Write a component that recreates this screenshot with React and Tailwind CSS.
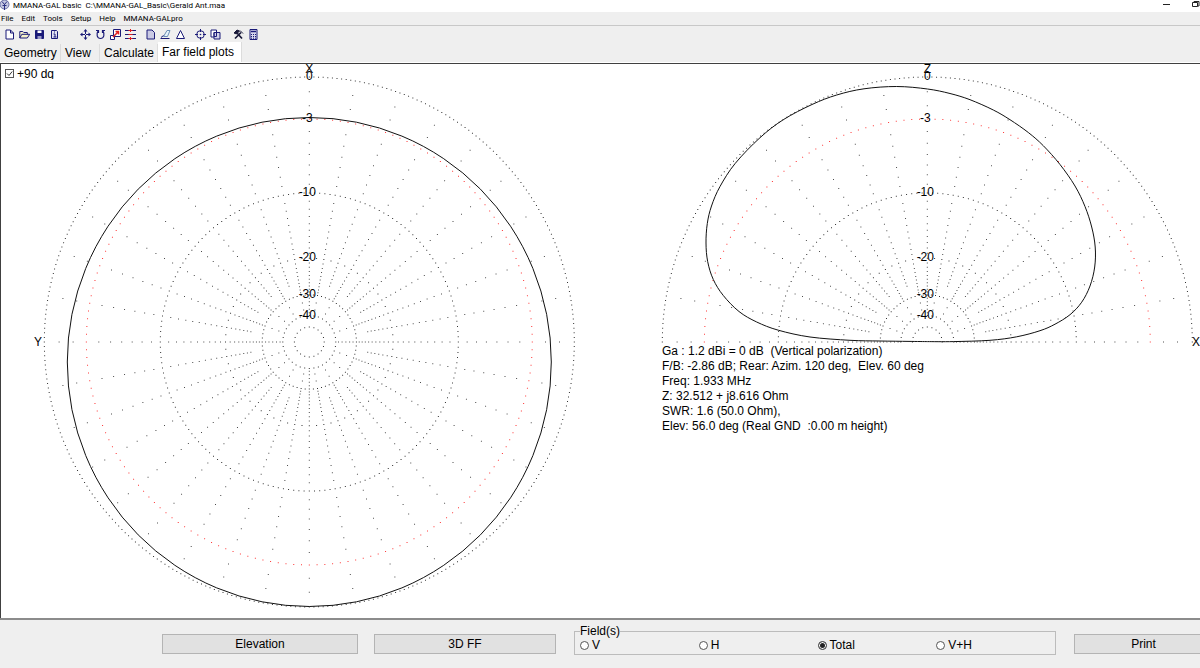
import { useState } from 'react';
import clsx from 'clsx';

const MENUS = ['File', 'Edit', 'Tools', 'Setup', 'Help', 'MMANA-GALpro'];
const TABS = [
  { name: 'Geometry', width: 'min-w-[61px]' },
  { name: 'View', width: 'min-w-[39px]' },
  { name: 'Calculate', width: 'min-w-[58px]' },
  { name: 'Far field plots', width: 'min-w-[84px]' },
];
const FIELDS = ['V', 'H', 'Total', 'V+H'];

const RESULTS = [
  'Ga : 1.2 dBi = 0 dB  (Vertical polarization)',
  'F/B: -2.86 dB; Rear: Azim. 120 deg,  Elev. 60 deg',
  'Freq: 1.933 MHz',
  'Z: 32.512 + j8.616 Ohm',
  'SWR: 1.6 (50.0 Ohm),',
  'Elev: 56.0 deg (Real GND  :0.00 m height)',
];

// Polar grid, 0 dB at the rim
const RADIUS = 265;
const RINGS = [
  { db: 0, step: 1 },
  { db: 3, step: 2, red: true },
  { db: 10, step: 2 },
  { db: 20, step: 5 },
  { db: 30, step: 5 },
  { db: 40, step: 10 },
  { db: 50, step: 18 },
];
const AXIS_DB = [31.3, 32.7, 34.4, 36.3, 38.3];

const toRadius = (db) => RADIUS * Math.pow(10, -db / 40);

const dot = (cx, cy, r, deg) => {
  const a = (deg * Math.PI) / 180;
  const x = cx + r * Math.cos(a) - 0.5;
  const y = cy - r * Math.sin(a) - 0.5;
  return `M${x.toFixed(2)} ${y.toFixed(2)}h1v1h-1z`;
};

const ringPath = (cx, cy, ring, sweep) => {
  let d = '';
  const last = sweep === 360 ? 360 - ring.step : 180;
  for (let deg = 0; deg <= last; deg += ring.step) {
    d += dot(cx, cy, toRadius(ring.db), deg);
  }
  return d;
};

// Every second radial stops short so the centre stays readable
const radialPath = (cx, cy, sweep) => {
  let d = '';
  const last = sweep === 360 ? 350 : 180;
  for (let deg = 0; deg <= last; deg += 10) {
    const axis = deg % 90 === 0;
    const long = axis || deg % 20 === 0;
    for (let db = 1; db < (long ? 30 : 27); db++) {
      if (db !== 3 && db !== 10 && db !== 20) d += dot(cx, cy, toRadius(db), deg);
    }
    if (long) {
      (axis ? AXIS_DB : [33, 36.5]).forEach((db) => {
        d += dot(cx, cy, toRadius(db), deg);
      });
    }
  }
  return d;
};

// Catmull-Rom spline through the sampled gain points
const smooth = (pts) => {
  let d = `M${pts[0][0]} ${pts[0][1]}`;
  for (let i = 0; i < pts.length - 1; i++) {
    const p0 = pts[i - 1] || pts[i];
    const p1 = pts[i];
    const p2 = pts[i + 1];
    const p3 = pts[i + 2] || p2;
    d += `C${p1[0] + (p2[0] - p0[0]) / 6} ${p1[1] + (p2[1] - p0[1]) / 6} ${p2[0] - (p3[0] - p1[0]) / 6} ${p2[1] - (p3[1] - p1[1]) / 6} ${p2[0]} ${p2[1]}`;
  }
  return d;
};

const ELEVATION = [
  [327.5, 277.6], [309, 277.4], [280, 277], [250, 276.3], [210, 273], [178.3, 266.2], [156.7, 258],
  [139, 247.5], [123.3, 231.5], [113.3, 215.5], [107.7, 197.7], [106, 179], [107.3, 159.5],
  [111.5, 142], [120, 122.5], [135.3, 99.3], [160, 73.7], [183.3, 55.7], [212, 40.5],
  [236.7, 31], [264, 24.8], [296.7, 22.5], [327.5, 25], [350, 29.5], [370, 35.7],
  [393.3, 46], [410, 55.7], [428.3, 68.5], [443.3, 81.7], [460, 100.5], [475, 122],
  [485, 142.5], [491.7, 163], [495.2, 183], [494.7, 203], [490, 222], [481.7, 238.2],
  [470, 250.7], [455, 260.2], [440, 266.7], [416.7, 272.8], [390, 276.3], [353.3, 277.6], [327.5, 277.6],
];

const PolarPlot = ({ cx, cy, height, sweep, title, children }) => (
  <svg viewBox={`0 0 600 ${height}`} className="block w-full overflow-visible" role="img" aria-label={title}>
    {RINGS.map((ring) => (
      <path
        key={ring.db}
        d={ringPath(cx, cy, ring, sweep)}
        fill={ring.red ? '#ff0000' : '#000000'}
        fillOpacity="0.8"
      />
    ))}
    <path d={radialPath(cx, cy, sweep)} fill="#000000" fillOpacity="0.7" />
    {children}
    <g fontSize="12" textAnchor="middle" fill="#000000">
      <text x={cx} y={cy - RADIUS + 3}>0</text>
      {[3, 10, 20, 30, 40].map((db) => (
        <text key={db} x={cx - 2} y={cy - toRadius(db) + 3}>{`-${db}`}</text>
      ))}
    </g>
  </svg>
);

const ToolIcon = ({ children }) => (
  <svg viewBox="0 0 11 11" className="size-[11px]" fill="none" stroke="#1b1b78" strokeWidth="1">
    {children}
  </svg>
);

const TOOLS = [
  [
    { name: 'New', icon: <path d="M2 1h4.500l3 3v6H2zM6.500 1v3h3" fill="#fff" /> },
    {
      name: 'Open',
      icon: <path d="M.8 9V2.500h3l1 1h3.500v2M.8 9l2-3.700h7.900L8.300 9z" fill="#f4f0c8" />,
    },
    {
      name: 'Save',
      icon: (
        <>
          <path d="M1.500 1.500h8v8h-8z" fill="#1b1b78" />
          <path d="M3.500 1.500h4v2.500h-4z" fill="#fff" stroke="none" />
          <path d="M3.500 7h4v3h-4z" fill="#9a9ac8" stroke="none" />
        </>
      ),
    },
    {
      name: 'Info',
      icon: (
        <>
          <path d="M2.500 1.500h5l1 1v7h-6z" fill="#e4e4f2" />
          <path d="M4.500 5h1.500v3M4.500 8h3M5 3h1" />
        </>
      ),
    },
  ],
  [
    {
      name: 'Move',
      icon: (
        <>
          <path d="M5.500 2v7M2 5.500h7" strokeDasharray="3 1" />
          <path d="M5.500 0l2 2.500h-4zM5.500 11l2-2.500h-4zM0 5.500l2.500-2v4zM11 5.500l-2.500-2v4z" fill="#1b1b78" stroke="none" />
        </>
      ),
    },
    {
      name: 'Rotate',
      icon: <path d="M1 1.500h2.500v2.500M3 2C1 5 2 9.500 5.500 9.500S10 5 8 2M7.500 4V1.500H10" strokeWidth="1.200" />,
    },
    {
      name: 'Scale',
      icon: (
        <>
          <path d="M3.500 .5h7v7h-7z" fill="#fff" />
          <path d="M.5 6.500h4v4h-4z" fill="#fff" />
          <path d="M3 8l5-5M5.500 2.500h3v3" stroke="#e02020" strokeWidth="1.500" />
        </>
      ),
    },
    {
      name: 'Segmentation',
      icon: (
        <>
          <path d="M0 1.500h11M0 5.500h11M0 9.500h11" />
          <path d="M3.500 1.500h4M3.500 5.500h4M3.500 9.500h4M5.500 0v3M5.500 8v3" stroke="#e02020" />
        </>
      ),
    },
  ],
  [
    { name: 'Wire list', icon: <path d="M2 1h5l2.500 2.500V10H2z" fill="#c9c9e4" /> },
    {
      name: 'Wire edit',
      icon: (
        <>
          <path d="M3.500 7.500l3.500-6h3l-2.500 6z" fill="#e6f3fb" stroke="#6c8fb5" />
          <path d="M.5 9.500h9M1 8.500l2.500-2" />
        </>
      ),
    },
    { name: 'Elements', icon: <path d="M5.500 1.500l4 8h-8z" fill="#fff" /> },
  ],
  [
    {
      name: 'Optimize',
      icon: (
        <>
          <circle cx="5.500" cy="5.500" r="3.800" />
          <path d="M5.500 0v3M5.500 8v3M0 5.500h3M8 5.500h3" />
          <circle cx="5.500" cy="5.500" r=".8" fill="#1b1b78" stroke="none" />
        </>
      ),
    },
    {
      name: 'Compare',
      icon: (
        <>
          <path d="M1 1h5.500v7H1z" fill="#fff" />
          <path d="M4 3.500h6V10H4z" fill="#d2d2ea" />
          <path d="M4 3.500h2.500v4H4z" />
        </>
      ),
    },
  ],
  [
    {
      name: 'Setup',
      icon: (
        <>
          <path d="M2 9.500l6-6M4 4l5 5.500" stroke="#181838" strokeWidth="1.700" />
          <path d="M1 4l3-3 2.500 1L3.500 5zM7 1.500l3 3" fill="#181838" stroke="#181838" />
        </>
      ),
    },
    {
      name: 'Calculator',
      icon: (
        <>
          <path d="M2 .5h7v10H2z" fill="#d8d8ec" />
          <path d="M3 2.500h5" strokeWidth="1.500" />
          <path d="M3 5.500h5M3 7.500h5M3 9.200h5" strokeDasharray="1 1" />
        </>
      ),
    },
  ],
];

const TitleBar = () => (
  <header className="flex h-3 items-center bg-white">
    <svg viewBox="0 0 10 12" className="h-3 w-[10px] shrink-0">
      <circle cx="4.500" cy="4.500" r="4.500" fill="#c3c6e0" stroke="#6a6fa5" />
      <path d="M4.500 10V4M2 1.500l2.500 3 2.500-3M2.500 5.500h4" stroke="#2a2f80" strokeWidth="1" fill="none" />
    </svg>
    <h1 className="ml-[3px] whitespace-pre font-[Roboto,'Noto_Sans',sans-serif] text-[8px] leading-[10px] text-black">
      {'MMANA-GAL basic  C:\\MMANA-GAL_Basic\\Gerald Ant.maa'}
    </h1>
    <div className="ml-auto flex h-3 items-start gap-[22px]">
      <button type="button" aria-label="Minimize">
        <svg viewBox="0 0 7 9" className="h-[9px] w-[7px]">
          <path d="M0 4.500h7" stroke="#222" />
        </svg>
      </button>
      <button type="button" aria-label="Restore">
        <svg viewBox="0 0 8 9" className="h-[9px] w-2">
          <path d="M.5 2.500h5v4h-5zM2 2.500v-1h5v4.500H5.500" stroke="#222" fill="none" />
        </svg>
      </button>
    </div>
  </header>
);

const MenuBar = () => (
  <nav className="flex h-[14px] items-center gap-2 border-b border-[#c8c8c8] pl-px font-[Roboto,'Noto_Sans',sans-serif] text-[8px] leading-[12px]">
    {MENUS.map((menu) => (
      <button key={menu} type="button">
        {menu}
      </button>
    ))}
  </nav>
);

const Toolbar = () => (
  <div className="flex h-[17px] items-center pl-1">
    {TOOLS.map((group, i) => (
      <div
        key={i}
        className={clsx('flex gap-1', i === 1 && 'ml-5', (i === 2 || i === 3) && 'ml-[9px]', i === 4 && 'ml-3')}
      >
        {group.map((tool) => (
          <button key={tool.name} type="button" aria-label={tool.name} title={tool.name}>
            <ToolIcon>{tool.icon}</ToolIcon>
          </button>
        ))}
      </div>
    ))}
  </div>
);

const Tabs = ({ active, onChange }) => (
  <div role="tablist" className="flex h-5 items-end border-b border-white text-[12px]">
    {TABS.map(({ name, width }) => (
      <button
        key={name}
        type="button"
        role="tab"
        aria-selected={name === active}
        onClick={() => onChange(name)}
        className={clsx(
          'whitespace-nowrap border-r border-[#dcdcdc] pl-1 text-left',
          width,
          name === active ? 'h-5 bg-white leading-4' : 'h-[18px] leading-[18px]'
        )}
      >
        {name}
      </button>
    ))}
  </div>
);

const FooterButton = ({ className, children }) => (
  <button type="button" className={clsx('mt-[14px] h-5 border border-[#b4b4b4] bg-[#e1e1e1] leading-[18px]', className)}>
    {children}
  </button>
);

const App = () => {
  const [tab, setTab] = useState('Far field plots');
  const [rotated, setRotated] = useState(true);
  const [field, setField] = useState('Total');

  return (
    <div className="min-h-screen overflow-hidden bg-[#efefef] font-['Liberation_Sans',Arial,sans-serif] text-black">
      <TitleBar />
      <MenuBar />
      <Toolbar />
      <Tabs active={tab} onChange={setTab} />

      <main className="relative grid grid-cols-2 border-b-2 border-t border-b-[#8c8c8c] border-t-[#404040] bg-white shadow-[inset_1px_0_0_#404040]">
        <label className="absolute left-[5px] top-[5px] flex h-[10px] items-start gap-[3px] overflow-hidden text-[12px] leading-[10px]">
          <span className="grid size-[9px]">
            <input
              type="checkbox"
              checked={rotated}
              onChange={(e) => setRotated(e.target.checked)}
              className="col-start-1 row-start-1 size-[9px] appearance-none border border-[#555] bg-white"
            />
            {rotated && (
              <svg viewBox="0 0 9 9" className="pointer-events-none col-start-1 row-start-1 size-[9px]">
                <path d="M2 4.500l2 2 3.200-4" stroke="#333" fill="none" />
              </svg>
            )}
          </span>
          +90 dg
        </label>

        {/* azimuth */}
        <PolarPlot cx={309.3} cy={278} height={554} sweep={360} title="Azimuth pattern">
          <ellipse cx={309.3} cy={298} rx={242} ry={244.5} fill="none" stroke="#111111" />
          <g fontSize="12" textAnchor="middle">
            <text x={309.3} y={9}>X</text>
            <text x={38} y={282}>Y</text>
          </g>
        </PolarPlot>

        {/* elevation */}
        <section>
          <PolarPlot cx={327.3} cy={278} height={280} sweep={180} title="Elevation pattern">
            <path d={smooth(ELEVATION)} fill="none" stroke="#111111" />
            <g fontSize="12" textAnchor="middle">
              <text x={327.3} y={9}>Z</text>
              <text x={596} y={282}>X</text>
            </g>
          </PolarPlot>
          <div className="whitespace-pre pl-[62px] text-[12px] leading-[15px]">
            {RESULTS.map((line) => (
              <p key={line}>{line}</p>
            ))}
          </div>
        </section>
      </main>

      <footer className="grid grid-cols-[196fr_182fr_484fr_128fr] items-start gap-x-4 pl-[162px] text-[12px]">
        <FooterButton>Elevation</FooterButton>
        <FooterButton>3D FF</FooterButton>
        <fieldset className="ml-[2px] mt-1 h-[31px] border border-[#bcbcbc] pl-[5px]">
          <legend className="h-[15px] leading-[15px]">Field(s)</legend>
          <div className="grid grid-cols-4">
            {FIELDS.map((name) => (
              <label key={name} className="flex items-center gap-[3px] leading-[13px]">
                <input
                  type="radio"
                  name="field"
                  value={name}
                  checked={field === name}
                  onChange={() => setField(name)}
                  className="size-[9px] appearance-none rounded-full border border-[#555] bg-white checked:bg-[#222] checked:shadow-[inset_0_0_0_1px_#fff]"
                />
                {name}
              </label>
            ))}
          </div>
        </fieldset>
        <FooterButton className="ml-[2px] border-r-0 pl-3">Print</FooterButton>
      </footer>
    </div>
  );
};

export default App;
